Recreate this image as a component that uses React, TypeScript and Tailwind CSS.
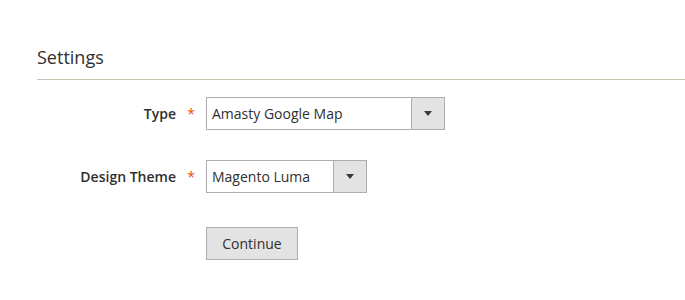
export default function App() {
  return (
    <div className="min-h-[300px] w-[685px] bg-white pl-[37px] text-[#303030] [font-family:'Open_Sans',sans-serif]">
      {/* Settings fieldset */}
      <div className="border-b border-[#cac3b4] pb-[11px] pt-[46px]">
        <h2 className="text-[18px] leading-[22px] font-normal text-[#303030]">Settings</h2>
      </div>

      <div className="mt-[17px]">
        <SelectRow label="Type" value="Amasty Google Map" width="w-[239px]" />
      </div>
      <div className="mt-[30px]">
        <SelectRow label="Design Theme" value="Magento Luma" width="w-[161px]" />
      </div>

      <div className="mt-[34px] flex">
        <div className="w-[169px]" />
        <button className="h-[33px] w-[92px] border border-[#adadad] bg-[#e3e3e3] text-[14px] text-[#303030]">
          Continue
        </button>
      </div>
    </div>
  );
}

function SelectRow({
  label,
  value,
  width,
}: {
  label: string;
  value: string;
  width: string;
}) {
  return (
    <div className="flex items-center">
      <label className="w-[139px] text-right text-[14px] font-semibold text-[#303030]">
        {label}
      </label>
      <span className="w-[30px] text-center text-[14px] text-[#eb5202]">*</span>
      <div className={`flex h-[33px] border border-[#adadad] bg-white ${width}`}>
        <span className="flex-1 truncate pl-[5px] text-[14px] leading-[31px] text-[#303030]">
          {value}
        </span>
        <span className="flex w-[33px] items-center justify-center border-l border-[#adadad] bg-[#e3e3e3]">
          <svg width="8" height="5" viewBox="0 0 8 5">
            <path d="M0 0h8L4 5z" fill="#41362f" />
          </svg>
        </span>
      </div>
    </div>
  );
}
